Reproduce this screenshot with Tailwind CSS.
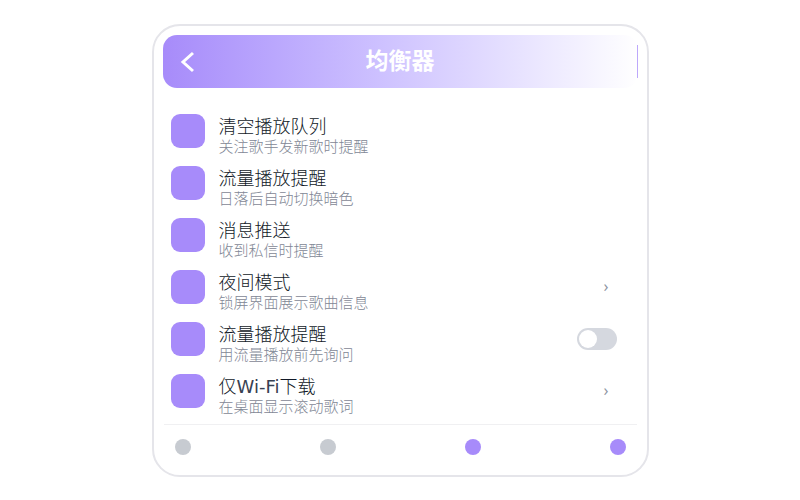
<!DOCTYPE html>
<html lang="zh-CN">
<head>
<meta charset="utf-8">
<meta name="viewport" content="width=device-width, initial-scale=1">
<title>均衡器</title>
<script src="https://cdn.jsdelivr.net/npm/@tailwindcss/browser@4"></script>
</head>
<body class="flex min-h-screen items-center justify-center bg-white px-4 font-['DejaVu_Sans','Noto_Sans_CJK_SC',sans-serif]">
<main class="mt-px w-full max-w-[497px] rounded-[28px] border-2 border-[#e5e5ea] bg-white px-[9px] pt-[9px] pb-[7px]">
  <header class="grid h-[53px] grid-cols-[48px_1fr_48px] items-center rounded-[14px] bg-linear-to-r from-[#a78bfa] to-white text-white">
    <button type="button" aria-label="返回" class="flex h-full items-center pl-[17px]">
      <svg class="h-6 w-4" viewBox="0 0 16 24" fill="none" stroke="currentColor" stroke-width="3" aria-hidden="true"><path d="M13 3 3 12 13 21"/></svg>
    </button>
    <h1 class="pb-0.5 text-center text-[23px] leading-7 font-bold">均衡器</h1>
    <span class="h-[33px] w-px justify-self-end bg-[#bda8fb]"></span>
  </header>
  <ul class="mt-[17px] px-2">
    <li class="flex h-[52px] items-center gap-[14px]">
      <span class="size-[34px] shrink-0 rounded-[9px] bg-[#a78bfa]"></span>
      <div class="min-w-0 flex-1 pt-3"><p class="text-[18px] leading-5 font-light text-[#111827]">清空播放队列</p><p class="text-[15px] leading-5 font-light text-[#7f8795]">关注歌手发新歌时提醒</p></div>
    </li>
    <li class="flex h-[52px] items-center gap-[14px]">
      <span class="size-[34px] shrink-0 rounded-[9px] bg-[#a78bfa]"></span>
      <div class="min-w-0 flex-1 pt-3"><p class="text-[18px] leading-5 font-light text-[#111827]">流量播放提醒</p><p class="text-[15px] leading-5 font-light text-[#7f8795]">日落后自动切换暗色</p></div>
    </li>
    <li class="flex h-[52px] items-center gap-[14px]">
      <span class="size-[34px] shrink-0 rounded-[9px] bg-[#a78bfa]"></span>
      <div class="min-w-0 flex-1 pt-3"><p class="text-[18px] leading-5 font-light text-[#111827]">消息推送</p><p class="text-[15px] leading-5 font-light text-[#7f8795]">收到私信时提醒</p></div>
    </li>
    <li class="flex h-[52px] items-center gap-[14px]">
      <span class="size-[34px] shrink-0 rounded-[9px] bg-[#a78bfa]"></span>
      <div class="min-w-0 flex-1 pt-3"><p class="text-[18px] leading-5 font-light text-[#111827]">夜间模式</p><p class="text-[15px] leading-5 font-light text-[#7f8795]">锁屏界面展示歌曲信息</p></div>
      <span class="pr-[21px] pb-0.5 font-['Noto_Sans',sans-serif] text-[16px] leading-5 text-[#8f96a3]">›</span>
    </li>
    <li class="flex h-[52px] items-center gap-[14px]">
      <span class="size-[34px] shrink-0 rounded-[9px] bg-[#a78bfa]"></span>
      <label for="ask" class="min-w-0 flex-1 pt-3"><span class="block text-[18px] leading-5 font-light text-[#111827]">流量播放提醒</span><span class="block text-[15px] leading-5 font-light text-[#7f8795]">用流量播放前先询问</span></label>
      <input id="ask" type="checkbox" role="switch" class="mr-[13px] h-[22px] w-10 shrink-0 appearance-none rounded-full bg-[#d5d8df] p-0.5 before:block before:size-[18px] before:rounded-full before:bg-white checked:bg-[#a78bfa] checked:before:ml-auto">
    </li>
    <li class="flex h-[52px] items-center gap-[14px]">
      <span class="size-[34px] shrink-0 rounded-[9px] bg-[#a78bfa]"></span>
      <div class="min-w-0 flex-1 pt-3"><p class="text-[18px] leading-5 font-light text-[#111827]">仅<span class="font-normal text-[#374151]">Wi-Fi</span>下载</p><p class="text-[15px] leading-5 font-light text-[#7f8795]">在桌面显示滚动歌词</p></div>
      <span class="pr-[21px] pb-0.5 font-['Noto_Sans',sans-serif] text-[16px] leading-5 text-[#8f96a3]">›</span>
    </li>
  </ul>
  <nav class="mx-px mt-[7px] flex h-11 items-center justify-between border-t border-[#f0f0f2] px-[11px]">
    <button type="button" aria-label="第一页" class="size-4 rounded-full bg-[#c7cbd1]"></button>
    <button type="button" aria-label="第二页" class="size-4 rounded-full bg-[#c7cbd1]"></button>
    <button type="button" aria-label="第三页" class="size-4 rounded-full bg-[#a78bfa]"></button>
    <button type="button" aria-label="第四页" class="size-4 rounded-full bg-[#a78bfa]"></button>
  </nav>
</main>
</body>
</html>
